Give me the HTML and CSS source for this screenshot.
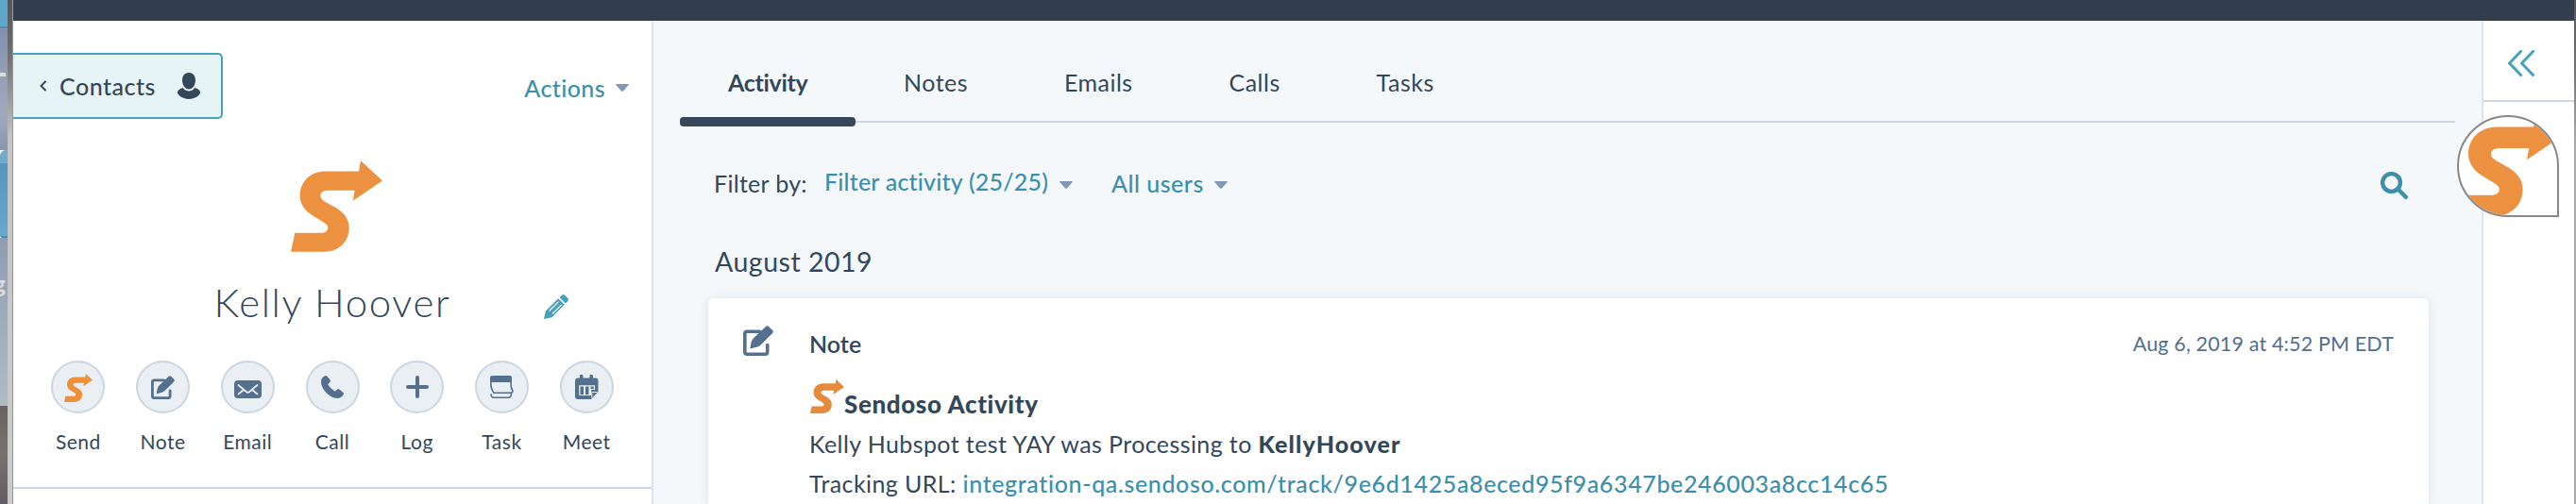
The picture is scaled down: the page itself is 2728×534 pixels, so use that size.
FILE: index.html
```html
<!DOCTYPE html>
<html lang="en">
<head>
<meta charset="utf-8">
<title>Kelly Hoover</title>
<link rel="stylesheet" href="styles.css">
</head>
<body>
<svg class="defs">
  <symbol id="logo" viewBox="25 30 291 290">
    <path d="M25 320 38 260H120C135 260 143 252 143 243C143 234 132 227 118 219L95 205C70 190 54 168 54 142C54 95 90 64 135 64H241L247 30 316 94 222 158 228 125H143C128 125 119 132 119 142C119 150 127 157 138 163L158 174C192 192 210 212 210 243C210 290 175 320 130 320Z"/>
  </symbol>
  <symbol id="note" viewBox="0 0 32 32">
    <path d="M17.5 6.2H4.2Q1.8 6.2 1.8 8.6V27.8Q1.8 30.2 4.2 30.2H23.3Q25.7 30.2 25.7 27.8V20.5" fill="none" stroke="currentColor" stroke-width="3.6" stroke-linecap="round"/>
    <path d="M7.3 24.6 8.6 17.5Q9 15.2 10.8 13.4L24 .9Q25.5-.4 27 1L31.2 5.1Q32.5 6.5 31.1 8L18.8 20.2Q17.3 21.8 15 22.6Z"/>
  </symbol>
  <symbol id="caret" viewBox="0 0 14 8">
    <path d="M.6 0H13.4Q14.4.2 13.6 1L8 7.4Q7 8.2 6 7.4L.4 1Q-.4.2.6 0Z"/>
  </symbol>
</svg>

<div class="desktop">
  <div class="folder"></div>
  <div class="sky"><i></i></div>
  <div class="folder second"></div>
  <div class="sky label"><span>g</span></div>
  <div class="rock"></div>
</div>
<div class="window-edge"></div>

<div class="app">
  <div class="topbar"></div>
  <div class="columns">
    <div class="sidebar">
      <div class="sidebar-head">
        <a class="back">
          <svg class="chevron" viewBox="0 0 8 12"><path d="M6.5 1 1.5 6 6.5 11" fill="none" stroke="currentColor" stroke-width="1.9"/></svg>
          <span>Contacts</span>
          <svg class="person" viewBox="0 0 24 28"><path d="M12 0C16.300 0 19 3 19 8C19 13 16 17.500 12 17.500S5 13 5 8C5 3 7.700 0 12 0ZM5.500 16Q8.500 19.500 12 19.500T18.500 16C21 17 24 18.500 24 21C24 24 18 28 12 28S0 24 0 21C0 18.500 3 17 5.500 16Z"/></svg>
        </a>
        <a class="actions">Actions <svg class="caret"><use href="#caret"/></svg></a>
      </div>
      <svg class="avatar orange"><use href="#logo"/></svg>
      <div class="name-row">
        <h1>Kelly Hoover</h1>
        <svg class="pencil" viewBox="0 0 26 26">
          <path d="M16.500 3.200 19 .8Q20.500-.6 22.200.9L25.200 3.800Q26.500 5.200 25.600 6.700L23 9.500Z"/>
          <path d="M15.200 4.300 21.700 10.800 8.500 24.200 0 26 1.900 17.600Z"/>
          <path d="M15.500 7.600 5.600 17.500M18.800 10.800 8.900 20.700" fill="none" stroke="#fff" stroke-width="1.200"/>
        </svg>
      </div>
      <div class="buttons">
        <div class="button"><i><svg class="send orange"><use href="#logo"/></svg></i>Send</div>
        <div class="button"><i><svg width="25" height="25"><use href="#note"/></svg></i>Note</div>
        <div class="button"><i><svg class="email" width="29" height="19" viewBox="0 0 29 19"><rect width="29" height="19" rx="4"/><path d="M4.500 5 13 12.200Q14.500 13.300 16 12.200L24.500 5M4.500 14.500 10 10M24.500 14.500 19 10" fill="none" stroke="#eaeff4" stroke-width="1.800" stroke-linecap="round"/></svg></i>Email</div>
        <div class="button"><i><svg width="24" height="24" viewBox="0 0 24 24"><path d="M4.200.3Q5.500-.3 6.500.8L9.600 4.600Q10.300 5.600 9.500 6.700L7.200 9.300Q9.800 14 14.800 16.700L17.200 14.500Q18.300 13.700 19.300 14.400L23.300 17.700Q24.400 18.700 23.700 20Q21.500 24 17 24Q10.500 23.500 5.200 17.800Q0 12 0 6Q.2 2 4.200.3Z"/></svg></i>Call</div>
        <div class="button"><i><svg width="24" height="24" viewBox="0 0 24 24"><path d="M12 2V22M2 12H22" stroke="currentColor" stroke-width="4" stroke-linecap="round"/></svg></i>Log</div>
        <div class="button"><i><svg width="25" height="24" viewBox="0 0 25 24"><path d="M2.500 0H21Q23 0 23 2V7H0V2Q0 0 2.500 0Z"/><path d="M.8 6Q.5 14 4 18.300H21.500Q24.500 17.500 23.800 16Q21.500 12 22.200 6M1 19.500Q1.300 23.200 3.500 23.200H20Q22.500 23 22.500 18.500" fill="none" stroke="currentColor" stroke-width="1.600"/></svg></i>Task</div>
        <div class="button"><i><svg class="meet" width="25" height="26" viewBox="0 0 25 26"><path d="M3 3.500H5V1.500Q5-.2 6.700-.2T8.500 1.500V3.500H15.500V1.500Q15.500-.2 17.200-.2T19 1.500V3.500H22Q24.500 3.500 24.500 6V18L17 26H3Q0 26 0 23V6.500Q0 3.500 3 3.500Z"/><path d="M4.200 11.200H21V16H17.200V22H4.200Z" fill="#eaeff4"/><path d="M5.500 12.500H9V21H5.500ZM11 12.500H14.500V21H11ZM16.500 12.500H19.700V15H16.500Z"/><path d="M17.800 24.500V18.500H23.500" fill="none" stroke="#eaeff4" stroke-width="1"/></svg></i>Meet</div>
      </div>
    </div>

    <div class="main">
      <div class="tabs">
        <a class="tab active">Activity</a>
        <a class="tab">Notes</a>
        <a class="tab">Emails</a>
        <a class="tab">Calls</a>
        <a class="tab">Tasks</a>
      </div>
      <div class="filters">
        <span class="by">Filter by:</span>
        <a class="filter-activity">Filter activity (25/25)</a>
        <svg class="caret"><use href="#caret"/></svg>
        <a class="users">All users</a>
        <svg class="caret"><use href="#caret"/></svg>
        <svg class="search" viewBox="0 0 29 29"><circle cx="11.500" cy="11.500" r="9.400"/><path d="M18.500 18.500 26.800 26.800"/></svg>
      </div>
      <h2>August 2019</h2>
      <div class="card">
        <svg class="note-icon"><use href="#note"/></svg>
        <div class="card-body">
          <div class="card-head">
            <span class="type">Note</span>
            <span class="date">Aug 6, 2019 at 4:52 PM EDT</span>
          </div>
          <div class="title"><svg class="orange"><use href="#logo"/></svg><b>Sendoso Activity</b></div>
          <p>Kelly Hubspot test YAY was Processing to <b class="who">KellyHoover</b></p>
          <p>Tracking URL: <a class="url">integration-qa.sendoso.com/track/9e6d1425a8eced95f9a6347be246003a8cc14c65</a></p>
        </div>
      </div>
    </div>

    <div class="rail">
      <div class="collapse">
        <svg viewBox="0 0 28 28"><path d="M13.500 1.500 1.500 14 13.500 26.500M26.500 1.500 14.500 14 26.500 26.500"/></svg>
      </div>
      <div class="badge"><svg class="orange"><use href="#logo"/></svg></div>
    </div>
  </div>
</div>
<div class="right-edge"></div>
</body>
</html>
```
FILE: styles.css
```css
* {
  box-sizing: border-box;
}
body {
  margin: 0;
  height: 534px;
  display: flex;
  overflow: hidden;
  background: #fff;
  color: #33475b;
  font-family: Lato, sans-serif;
  font-size: 25px;
  line-height: 30px;
}
svg {
  display: block;
  flex: none;
  fill: currentColor;
}
a {
  color: #3b8fad;
}
h1, h2, p {
  margin: 0;
  font-weight: 400;
}
.defs {
  display: none;
}
.orange {
  color: #ec9140;
}
.caret {
  width: 14px;
  height: 8px;
  color: #7f98b8;
}

/* strip of desktop behind the window */
.desktop {
  width: 8px;
  display: flex;
  flex-direction: column;
  overflow: hidden;
}
.folder {
  flex: none;
  height: 30px;
  background: #5ea7cb;
  border-bottom: 2px solid #4b8fb6;
}
.folder.second {
  height: 93px;
  border-radius: 6px 0 0 3px;
  background: linear-gradient(#72abc9 14px, #5596c0 14px, #68a8cb);
}
.sky {
  flex: none;
  height: 129px;
  padding-top: 47px;
  background: linear-gradient(#8390ac, #a2a9bb 70%, #8795b0);
}
.sky i {
  display: block;
  width: 6px;
  height: 4px;
  background: #ddd;
}
.sky.label {
  height: 178px;
  padding-top: 33px;
  background: linear-gradient(#8f9db2, #b0bbc5);
}
.sky.label span {
  display: block;
  width: 6px;
  direction: rtl;
  font-weight: 700;
  color: #ddd;
}
.rock {
  flex: 1;
  background: linear-gradient(#696162, #7a716f 50%, #625d62);
}
.window-edge {
  width: 6px;
  background: linear-gradient(#555, #707070 60px, #c2c4c5 145px, #cbcbcb);
  border-right: 1px solid #999;
}
.right-edge {
  width: 2px;
  background: linear-gradient(#555, #777 80px, #aaa 150px);
}

.app {
  flex: 1;
  display: flex;
  flex-direction: column;
}
.topbar {
  flex: none;
  height: 22px;
  background: #323e4e;
}
.columns {
  flex: 1;
  display: flex;
}

.sidebar {
  width: 678px;
  border-right: 2px solid #dfe3eb;
  padding-top: 34px;
}
.sidebar-head {
  display: flex;
  justify-content: space-between;
}
.back {
  width: 222px;
  height: 70px;
  padding-left: 28px;
  display: flex;
  align-items: center;
  border: 2px solid #45a2bc;
  border-left: 0;
  border-radius: 0 5px 5px 0;
  background: #e6f4f6;
  color: #33475b;
  font-weight: 500;
  letter-spacing: .5px;
}
.back .chevron {
  width: 8px;
  height: 12px;
  margin-right: 13px;
}
.back span {
  width: 125px;
}
.person {
  width: 24px;
  height: 28px;
}
.actions {
  display: flex;
  align-items: center;
  gap: 11px;
  padding: 3px 24px 0 0;
  font-weight: 500;
  letter-spacing: .4px;
}
.avatar {
  width: 97px;
  height: 97px;
  margin: 44px 0 28px 294px;
}
.name-row {
  display: grid;
  grid-template-columns: 1fr auto 1fr;
  align-items: center;
}
.name-row h1 {
  grid-column: 2;
  font-size: 42px;
  font-weight: 300;
  line-height: 50px;
  letter-spacing: 1.600px;
}
.pencil {
  width: 26px;
  height: 26px;
  margin: 10px 0 0 99px;
  color: #45a2bc;
}
.buttons {
  display: flex;
  padding: 37px 24px 36px;
  border-bottom: 2px solid #cbd6e2;
}
.button {
  width: 90px;
  text-align: center;
  font-size: 21px;
  line-height: 24px;
  letter-spacing: .5px;
}
.button i {
  width: 57px;
  height: 56px;
  margin: 0 auto 18px;
  display: flex;
  align-items: center;
  justify-content: center;
  border: 2px solid #cbd6e2;
  border-radius: 50%;
  background: #eaeff4;
  color: #54708f;
}
.button .send {
  width: 30px;
  height: 30px;
  margin-top: 2px;
  color: #f0913a;
}
.button .email {
  margin-top: 4px;
}

.main {
  flex: 1;
  background: #f4f8fb;
}
.tabs {
  display: flex;
  margin: 0 28px;
  border-bottom: 2px solid #cbd6e2;
}
.tab {
  height: 106px;
  padding: 50px 50.800px 0 51px;
  color: #33475b;
  letter-spacing: .5px;
}
.tab.active {
  position: relative;
  width: 186px;
  font-weight: 700;
  letter-spacing: -.3px;
}
.tab.active::after {
  content: '';
  position: absolute;
  left: 0;
  bottom: -6px;
  width: 186px;
  height: 10px;
  border-radius: 4px;
  background: #37475b;
}
.filters {
  height: 128px;
  display: flex;
  align-items: center;
  padding: 0 78px 0 64px;
}
.filters a {
  font-weight: 500;
}
.filters .caret {
  margin-top: 4px;
}
.by {
  width: 117px;
  letter-spacing: .3px;
}
.filter-activity {
  width: 249px;
  padding-bottom: 4px;
  white-space: nowrap;
  letter-spacing: .2px;
}
.users {
  width: 109px;
  margin-left: 41px;
  letter-spacing: .5px;
}
.search {
  width: 29px;
  height: 29px;
  margin: 4px 0 0 auto;
  fill: none;
  stroke: #3b8fad;
  stroke-width: 4.400px;
  stroke-linecap: round;
}
h2 {
  margin: 2px 0 22px 65px;
  font-size: 28.500px;
  line-height: 34px;
  letter-spacing: .5px;
}
.card {
  height: 218px;
  margin: 0 56px 0 58px;
  padding: 27px 37px 0;
  display: flex;
  border-radius: 6px 6px 0 0;
  background: #fff;
  box-shadow: 0 1px 12px rgba(45, 62, 80, .12);
}
.note-icon {
  width: 32px;
  height: 32px;
  margin: 2px 38px 0 0;
  color: #54708f;
}
.card-body {
  flex: 1;
  line-height: 42px;
}
.card-head {
  display: flex;
  justify-content: space-between;
}
.type {
  font-weight: 600;
}
.date {
  font-size: 21.500px;
  letter-spacing: .15px;
  color: #516f90;
}
.title {
  display: flex;
  align-items: baseline;
  margin-top: 17px;
}
.title svg {
  width: 36px;
  height: 36px;
  margin-left: 1px;
  color: #e68a3c;
}
.title b {
  font-size: 26px;
  font-weight: 900;
  letter-spacing: .6px;
  line-height: 42px;
}
.card p {
  letter-spacing: .4px;
}
.who {
  font-weight: 900;
  letter-spacing: 1.100px;
}
.url {
  font-weight: 500;
  letter-spacing: .63px;
}

.rail {
  position: relative;
  width: 98px;
  border-left: 2px solid #dfe3eb;
}
.collapse {
  height: 86px;
  padding: 31px 0 0 26px;
  border-bottom: 2px solid #cbd6e2;
}
.collapse svg {
  width: 28px;
  height: 28px;
  fill: none;
  stroke: #45a2bc;
  stroke-width: 3px;
  stroke-linecap: round;
  stroke-linejoin: round;
}
/* floating widget, hangs over the edge of the rail */
.badge {
  position: absolute;
  top: 100px;
  left: -28px;
  width: 108px;
  height: 108px;
  overflow: hidden;
  border: 2px solid #888;
  border-radius: 50% 50% 0 50%;
  background: #fff;
}
.badge svg {
  width: 108px;
  height: 107px;
  margin: -2px 0 0 -1px;
}
```
